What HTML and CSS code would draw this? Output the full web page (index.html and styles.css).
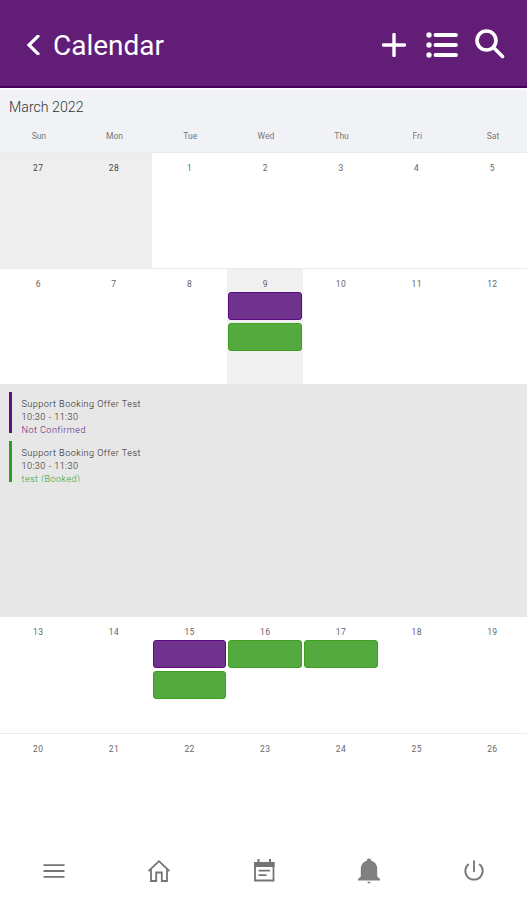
FILE: index.html
```html
<!DOCTYPE html>
<html lang="en">
<head>
  <meta charset="UTF-8">
  <meta name="viewport" content="width=device-width, initial-scale=1.0">
  <title>Calendar</title>
  <link rel="stylesheet" href="styles.css">
</head>
<body>
  <header class="app-bar">
    <svg class="icon-back" viewBox="0 0 14 20"><path d="M12 1.200 3 10l9 8.800"/></svg>
    <h1>Calendar</h1>
    <div class="actions">
      <svg class="icon-add" viewBox="0 0 24 24"><path d="M12 1.500v21M1.500 12h21"/></svg>
      <svg class="icon-list" viewBox="0 0 32 26">
        <path d="M9.500 3h20.500M9.500 13h20.500M9.500 23h20.500"/>
        <circle cx="3" cy="3" r="2.700"/><circle cx="3" cy="13" r="2.700"/><circle cx="3" cy="23" r="2.700"/>
      </svg>
      <svg class="icon-search" viewBox="0 0 30 30"><circle cx="11.500" cy="11.500" r="9.500"/><path d="m18.500 18.500 9 9"/></svg>
    </div>
  </header>

  <main class="calendar">
    <div class="calendar-head">
      <h2>March 2022</h2>
      <div class="weekdays">
        <span>Sun</span><span>Mon</span><span>Tue</span><span>Wed</span><span>Thu</span><span>Fri</span><span>Sat</span>
      </div>
    </div>

    <div class="week">
      <div class="day other-month">27</div>
      <div class="day other-month">28</div>
      <div class="day">1</div>
      <div class="day">2</div>
      <div class="day">3</div>
      <div class="day">4</div>
      <div class="day">5</div>
    </div>

    <div class="week">
      <div class="day">6</div>
      <div class="day">7</div>
      <div class="day">8</div>
      <div class="day selected">9
        <div class="event offer"></div>
        <div class="event booked"></div>
      </div>
      <div class="day">10</div>
      <div class="day">11</div>
      <div class="day">12</div>
    </div>

    <div class="details">
      <div class="booking offer-item">
        <p>Support Booking Offer Test</p>
        <p>10:30 - 11:30</p>
        <p class="status">Not Confirmed</p>
      </div>
      <div class="booking booked-item">
        <p>Support Booking Offer Test</p>
        <p>10:30 - 11:30</p>
        <p class="status">test (Booked)</p>
      </div>
    </div>

    <div class="week no-line">
      <div class="day">13</div>
      <div class="day">14</div>
      <div class="day">15
        <div class="event offer"></div>
        <div class="event booked"></div>
      </div>
      <div class="day">16
        <div class="event booked"></div>
      </div>
      <div class="day">17
        <div class="event booked"></div>
      </div>
      <div class="day">18</div>
      <div class="day">19</div>
    </div>

    <div class="week">
      <div class="day">20</div>
      <div class="day">21</div>
      <div class="day">22</div>
      <div class="day">23</div>
      <div class="day">24</div>
      <div class="day">25</div>
      <div class="day">26</div>
    </div>
  </main>

  <nav class="tab-bar">
    <a><svg class="icon-line" viewBox="0 0 24 24"><path d="M1.500 6.200h21M1.500 12h21M1.500 17.800h21"/></svg></a>
    <a><svg class="icon-line" viewBox="0 0 24 24"><path d="M1.500 12.200 12 2.200l10.500 10M4 10.200v11.800h5.200v-8.500h5.600v8.500H20V10.200"/></svg></a>
    <a><svg class="icon-line" viewBox="0 0 24 24"><path d="M3 4h18.500v17.500H3z"/><path class="fill" d="M2 3h20.500v5H2zM5.500 0h2v4h-2zM17 0h2v4h-2z"/><path d="M6.500 11.700H18M6.500 16.200h8"/></svg></a>
    <a><svg class="icon-bell" viewBox="0 0 24 26"><path d="M12 .5c1.300 0 2.200.8 2.200 2.200 4 1.200 6 4.300 6 8.300v7.500l2.800 2.500v1.500H1V21l2.800-2.500V11c0-4 2-7.100 6-8.300C9.800 1.300 10.700.5 12 .5zM10.500 23.800h3c0 1-.6 1.600-1.500 1.600s-1.500-.6-1.500-1.600z"/></svg></a>
    <a><svg class="icon-power" viewBox="0 0 24 24"><path d="M12 1.500V13M6.800 5a8.700 8.700 0 1 0 10.400 0"/></svg></a>
  </nav>
</body>
</html>
```

FILE: styles.css
```css
* {
  margin: 0;
  padding: 0;
  box-sizing: border-box;
}
body {
  display: flex;
  flex-direction: column;
  height: 100vh;
  overflow: hidden;
  background: #fff;
  color: #555;
  font-family: Roboto, "Liberation Sans", sans-serif;
}
svg {
  display: block;
  fill: none;
}
.app-bar {
  display: flex;
  flex-shrink: 0;
  align-items: center;
  height: 88px;
  padding: 3px 22px 0 26px;
  background: #621d77;
  border-bottom: 2px solid #480060;
  color: #fff;
}
.app-bar svg {
  stroke: #fff;
  stroke-linecap: round;
}
.app-bar h1 {
  margin-left: 13px;
  padding-top: 3px;
  font-size: 28px;
  font-weight: 400;
  line-height: 34px;
}
.icon-back {
  width: 14px;
  height: 20px;
  stroke-width: 3.2;
}
.actions {
  display: flex;
  align-items: center;
  margin-left: auto;
}
.icon-add {
  width: 24px;
  height: 24px;
  margin-right: 20px;
  stroke-width: 3.4;
}
.icon-list {
  width: 32px;
  height: 26px;
  margin-right: 17px;
  stroke-width: 3.8;
}
.icon-list circle {
  fill: #fff;
  stroke: none;
}
.icon-search {
  width: 30px;
  height: 30px;
  margin-bottom: 2px;
  stroke-width: 3.6;
}
.calendar {
  flex: 1;
  overflow: hidden;
}
.calendar-head {
  height: 64px;
  padding-top: 9px;
  border-top: 2px solid #fafafc;
  background: #f1f2f5;
}
.calendar-head h2 {
  padding-left: 9px;
  color: #333;
  font-size: 14.2px;
  font-weight: 300;
  line-height: 17px;
}
.weekdays,
.week {
  display: grid;
  grid-template-columns: repeat(7, 75.7px);
}
.weekdays {
  padding: 15px 0 0 1px;
  color: #777;
  font-size: 8.5px;
  line-height: 11px;
  text-align: center;
}
.week {
  height: 116px;
  padding-left: 0.4px;
  border-top: 1px solid #ebebed;
}
.week.no-line {
  border-top: none;
}
.day {
  padding: 9px 1px 0;
  color: #666;
  font-size: 8.5px;
  letter-spacing: 0.4px;
  line-height: 12px;
  text-align: center;
}
.other-month {
  background: #eee;
  color: #444;
}
.selected {
  background: #f0f0f0;
}
.event {
  height: 28px;
  margin: 2px 0 3px;
  border: 1px solid;
  border-radius: 3px;
}
.event + .event {
  margin-top: 0;
}
.offer {
  background: #70338d;
  border-color: #5b0a80;
}
.booked {
  background: #54a93f;
  border-color: #3e9f20;
}
.details {
  height: 233px;
  padding: 8px 9px;
  background: #e7e7e7;
}
.booking {
  height: 41px;
  margin-bottom: 8px;
  padding: 6px 0 0 9.5px;
  overflow: hidden;
  border-left: 3px solid;
  font-size: 9.1px;
  font-weight: 300;
  letter-spacing: 0.45px;
  line-height: 13px;
}
.booking p {
  color: #222;
}
.offer-item {
  border-color: #5b1283;
}
.booked-item {
  border-color: #2c9f20;
}
.offer-item .status {
  color: #5b1283;
}
.booked-item .status {
  color: #2c9f20;
}
.tab-bar {
  display: grid;
  grid-template-columns: repeat(5, 1fr);
  flex-shrink: 0;
  align-items: center;
  justify-items: center;
  height: 58px;
  padding-left: 1px;
  background: #fff;
}
.tab-bar svg {
  width: 24px;
  height: 24px;
  stroke: #747474;
  stroke-width: 1.8;
}
.tab-bar .icon-bell {
  height: 26px;
  fill: #808080;
  stroke: none;
}
.tab-bar .fill {
  fill: #747474;
  stroke: none;
}
```
